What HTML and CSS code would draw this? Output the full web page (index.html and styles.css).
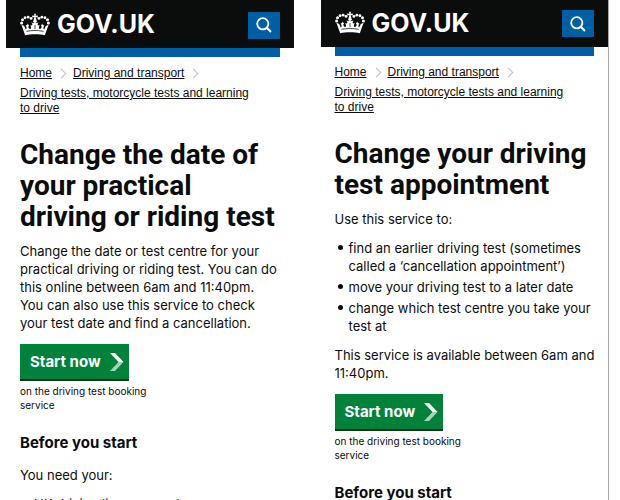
FILE: index.html
```html
<!DOCTYPE html>
<html lang="en">
<head>
<meta charset="utf-8">
<meta name="viewport" content="width=device-width, initial-scale=1">
<title>Change your driving test - GOV.UK</title>
<link rel="stylesheet" href="styles.css">
</head>
<body>
<svg class="sprite" aria-hidden="true">
  <symbol id="crown" viewBox="0 0 32 24">
    <path d="M15 0.500h2l-.4 2.200 2.400-.4v2.200l-2.300-.4.8 3.200h-3l.8-3.200-2.300.4V2.300l2.400.4z"/>
    <circle cx="16" cy="8.500" r="1.900"/>
    <circle cx="11.800" cy="5.500" r="1.500"/><circle cx="8.700" cy="4.200" r="1.500"/><circle cx="5.400" cy="4.800" r="1.500"/><circle cx="2.700" cy="7" r="1.600"/><circle cx="1.700" cy="10.300" r="1.600"/>
    <circle cx="20.200" cy="5.500" r="1.500"/><circle cx="23.300" cy="4.200" r="1.500"/><circle cx="26.600" cy="4.800" r="1.500"/><circle cx="29.300" cy="7" r="1.600"/><circle cx="30.300" cy="10.300" r="1.600"/>
    <path d="M5.500 23.500 1.500 12.300l3 1.400 1.700 3.500c.8-.3 1-1 .8-1.900l-1-2.800c1.200.5 1.700 0 2.300-1.500l1.400 2.700-1 .5c.5 2 1.400 2.800 2.300 2.500s1-1.500.6-2.700l-.8-1.200 2 .3.500-1.600-1.300-1.600 3.100.8L16 9l.9 1.700 3.100-.8-1.300 1.600.5 1.600 2-.3-.8 1.200c-.4 1.200-.3 2.400.6 2.700s1.800-.5 2.300-2.500l-1-.5 1.400-2.700c.6 1.500 1.100 2 2.300 1.500l-1 2.800c-.2.9 0 1.600.8 1.900l1.700-3.500 3-1.400-4 11.200c-6-1.300-15-1.300-21 0z"/>
    <path d="M6.800 19.300c6-1.200 12.400-1.200 18.400 0M16 12.500v4.500" fill="none" stroke="#0b0c0c" stroke-width=".8"/>
  </symbol>
  <symbol id="search" viewBox="0 0 16 16">
    <circle cx="6.800" cy="6.800" r="5.600" fill="none" stroke="currentColor" stroke-width="1.800"/>
    <path d="m10.800 10.800 4.200 4.200" fill="none" stroke="currentColor" stroke-width="2"/>
  </symbol>
  <symbol id="chevron" viewBox="0 0 14 18">
    <path d="M0 0h5l8.500 9h-5z" fill="#fff"/>
    <path d="M8.500 9h5L5 18H0z" fill="#a5d3b5"/>
  </symbol>
</svg>

<div class="screens">
  <section class="screen screen-current">
    <header class="header">
      <a class="logo" href="#"><svg class="crown"><use href="#crown"/></svg><span>GOV.UK</span></a>
      <button class="search" type="button" aria-label="Search"><svg><use href="#search"/></svg></button>
    </header>
    <div class="content">
      <div class="bar"></div>
      <nav aria-label="Breadcrumb">
        <ol class="crumbs">
          <li><a href="#">Home</a></li>
          <li><a href="#">Driving and transport</a></li>
          <li><a href="#">Driving tests, motorcycle tests and learning to drive</a></li>
        </ol>
      </nav>
      <h1>Change the date of your practical driving or riding test</h1>
      <p>Change the date or test centre for your practical driving or riding test. You can do this online between 6am and 11:40pm. You can also use this service to check your test date and find a cancellation.</p>
      <a class="start" href="#">Start now <svg><use href="#chevron"/></svg></a>
      <p class="hint">on the driving test booking service</p>
      <h2>Before you start</h2>
      <p>You need your:</p>
      <ul class="bullets">
        <li>UK driving licence number</li>
      </ul>
    </div>
  </section>

  <section class="screen screen-new">
    <header class="header">
      <a class="logo" href="#"><svg class="crown"><use href="#crown"/></svg><span>GOV.UK</span></a>
      <button class="search" type="button" aria-label="Search"><svg><use href="#search"/></svg></button>
    </header>
    <div class="content">
      <div class="bar"></div>
      <nav aria-label="Breadcrumb">
        <ol class="crumbs">
          <li><a href="#">Home</a></li>
          <li><a href="#">Driving and transport</a></li>
          <li><a href="#">Driving tests, motorcycle tests and learning to drive</a></li>
        </ol>
      </nav>
      <h1>Change your driving test appointment</h1>
      <p>Use this service to:</p>
      <ul class="bullets">
        <li>find an earlier driving test (sometimes called a ‘cancellation appointment’)</li>
        <li>move your driving test to a later date</li>
        <li>change which test centre you take your test at</li>
      </ul>
      <p>This service is available between 6am and 11:40pm.</p>
      <a class="start" href="#">Start now <svg><use href="#chevron"/></svg></a>
      <p class="hint">on the driving test booking service</p>
      <h2>Before you start</h2>
    </div>
  </section>
</div>
</body>
</html>
```
FILE: styles.css
```css
* { box-sizing: border-box; }

body {
  margin: 0;
  background: #fff;
  color: #0b0c0c;
  font: 13px/18px Inter, "Liberation Sans", sans-serif;
}

a { color: inherit; }

.sprite { position: absolute; width: 0; height: 0; }

.screens {
  display: grid;
  grid-template-columns: 1fr 1fr;
  gap: 26px;
  height: 100vh;
  padding: 0 11px 0 6px;
  overflow: hidden;
}

.screen { border-right: 1px solid transparent; overflow: hidden; }
.screen-new { border-right-color: #a8a8a8; }

.header {
  display: flex;
  align-items: center;
  justify-content: space-between;
  height: 47px;
  padding: 0 14px;
  background: #0b0c0c;
  color: #fff;
}
.screen-current .header { height: 48px; padding-top: 2px; }

.logo {
  display: flex;
  align-items: center;
  gap: 7px;
  font-size: 25px;
  font-weight: 700;
  line-height: 30px;
  padding-bottom: 2px;
  text-decoration: none;
}
.crown { width: 30px; height: 23px; fill: #fff; }

.search {
  display: grid;
  place-items: center;
  width: 32px;
  height: 27px;
  padding: 0;
  border: 0;
  background: #005ea5;
  color: #fff;
}
.search svg { width: 16px; height: 16px; }

.content { padding: 0 14px; }
.bar { height: 9px; background: #005ea5; }

.crumbs {
  display: flex;
  flex-wrap: wrap;
  row-gap: 5px;
  margin: 9px 0 23px;
  padding: 0 20px 0 0;
  list-style: none;
  font-family: "Liberation Sans", sans-serif;
  font-size: 12px;
  line-height: 15px;
}
.crumbs li { display: flex; align-items: center; }
.crumbs li:not(:last-child)::after {
  content: "";
  width: 6px;
  height: 6px;
  margin: 0 8px 0 6px;
  border: solid #bfc1c3;
  border-width: 1px 1px 0 0;
  transform: rotate(45deg);
}

h1 {
  margin: 0 -3px 10px 0;
  font-family: Roboto, "Liberation Sans", sans-serif;
  font-size: 28px;
  line-height: 31px;
}
h2 { margin: 21px 0 13px; font-size: 15px; line-height: 20px; }
p { margin: 0 0 12px; }
.screen-new p { margin-right: -3px; }

.bullets { margin: -1px 0 11px; padding-left: 3px; list-style: none; }
.bullets li {
  display: grid;
  grid-template-columns: 11px 1fr;
  margin-bottom: 3px;
}
.bullets li::before {
  content: "";
  width: 5px;
  height: 5px;
  margin-top: 6px;
  border-radius: 50%;
  background: #0b0c0c;
}

.start {
  display: inline-flex;
  align-items: center;
  gap: 9px;
  height: 37px;
  padding: 0 5px 0 10px;
  border-bottom: 2px solid #003618;
  background: #00823b;
  color: #fff;
  font-size: 15px;
  font-weight: 700;
  text-decoration: none;
}
.start svg { width: 14px; height: 18px; }

.hint, .screen-new .hint { width: 140px; margin: 3px 0 12px; font-size: 10px; line-height: 14px; }
```
